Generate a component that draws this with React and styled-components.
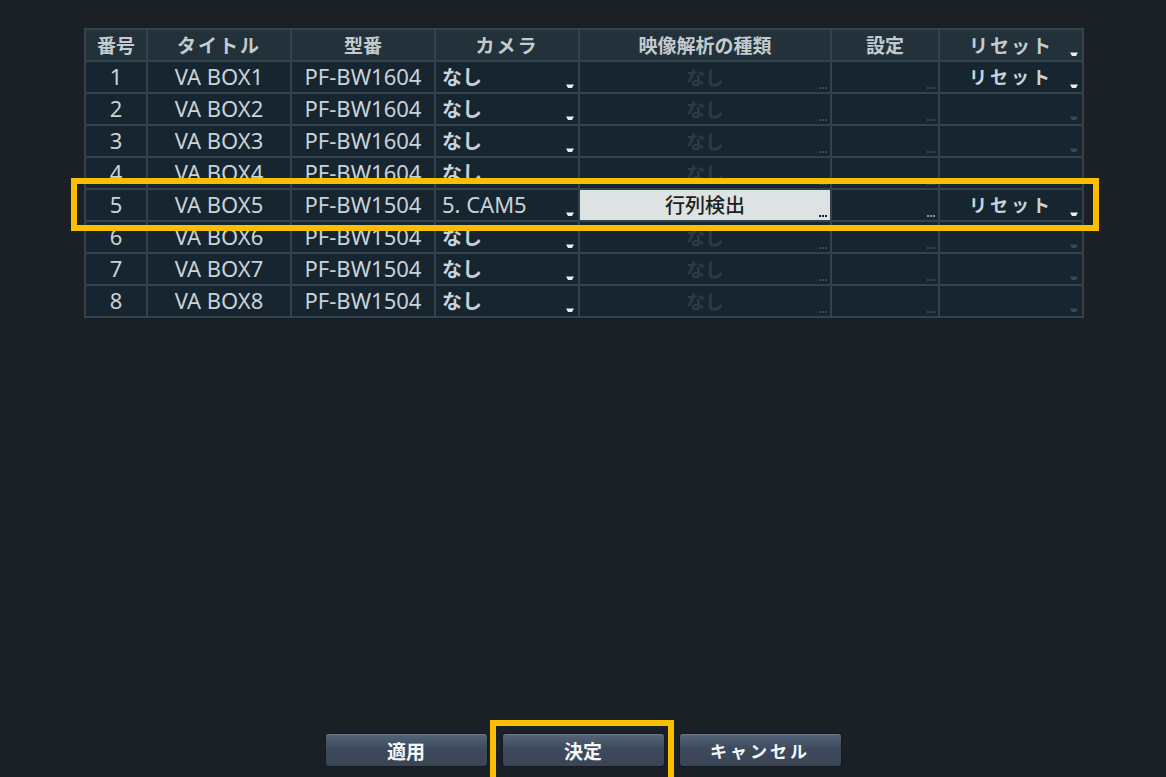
import React from 'react';
import styled, { createGlobalStyle } from 'styled-components';

const GlobalStyle = createGlobalStyle`
  html, body {
    margin: 0;
    padding: 0;
    background: #1b2027;
  }
  body {
    font-family: "Noto Sans", "Noto Sans CJK JP", sans-serif;
  }
`;

const Screen = styled.div`
  width: 1166px;
  height: 777px;
  background: #1b2027;
  display: flex;
  flex-direction: column;
  justify-content: space-between;
  overflow: hidden;
  position: relative;
`;

const TableWrap = styled.div`
  padding: 28px 0 0 84px;
`;

const Table = styled.div`
  display: grid;
  grid-template-columns: 60px 142px 142px 142px 250px 106px 142px;
  grid-auto-rows: 30px;
  gap: 2px;
  padding: 2px;
  width: max-content;
  background: #33434d;
`;

const Row = styled.div`
  display: contents;
`;

const HeadCell = styled.div`
  position: relative;
  background: #22313a;
  color: #c3cbcf;
  font-family: "Noto Sans CJK JP", sans-serif;
  font-weight: 700;
  font-size: 19px;
  letter-spacing: ${(p) => (p.$wide ? '2px' : '0')};
  display: flex;
  align-items: center;
  justify-content: center;
  padding-bottom: 2px;
`;

const Cell = styled.div`
  position: relative;
  background: ${(p) => (p.$lit ? '#dde2e2' : '#172530')};
  color: ${(p) => (p.$lit ? '#1c1f22' : p.$dim ? '#2c3c47' : '#c9d2d6')};
  font-family: "Noto Sans", "Noto Sans CJK JP", sans-serif;
  font-size: 22px;
  font-weight: 400;
  display: flex;
  align-items: center;
  justify-content: ${(p) => (p.$left ? 'flex-start' : 'center')};
  padding-left: ${(p) => (p.$left ? '6px' : '0')};
  padding-bottom: 2px;
  letter-spacing: ${(p) => (p.$wide ? '3px' : '0')};
  white-space: nowrap;
`;

const Jp = styled.span`
  font-family: "Noto Sans CJK JP", sans-serif;
  font-size: ${(p) => p.$size || 18}px;
  font-weight: ${(p) => p.$weight || 700};
`;

const Arrow = styled.svg`
  position: absolute;
  right: 4px;
  bottom: 3px;
  width: 8px;
  height: 5px;
`;

const Dots = styled.div`
  position: absolute;
  right: 3px;
  bottom: 3px;
  display: flex;
  gap: 1px;
  span {
    width: 2px;
    height: 2px;
    background: ${(p) => p.$color};
  }
`;

const Highlight = styled.div`
  position: absolute;
  left: ${(p) => p.$l}px;
  top: ${(p) => p.$t}px;
  width: ${(p) => p.$w}px;
  height: ${(p) => p.$h}px;
  border: 6px solid #fcbf00;
  box-sizing: border-box;
  pointer-events: none;
`;

const ButtonBar = styled.div`
  display: flex;
  justify-content: center;
  gap: 16px;
  padding: 0 0 11px 0;
`;

const Button = styled.div`
  width: 161px;
  height: 32px;
  border-radius: 3px;
  background: linear-gradient(#55657a, #3e4a5c 45%, #3a4557);
  box-shadow: inset 0 1px 0 rgba(255, 255, 255, 0.15), 0 0 0 1px #151a20;
  color: #f4f6f8;
  font-family: "Noto Sans CJK JP", sans-serif;
  font-weight: 700;
  font-size: ${(p) => (p.$wide ? '17px' : '19px')};
  letter-spacing: ${(p) => (p.$wide ? '3px' : '0')};
  display: flex;
  align-items: center;
  justify-content: center;
`;

const DropArrow = ({ color = '#e8ecee' }) => (
  <Arrow viewBox="0 0 8 5">
    <path d="M0 0.5 H8 L6 4 H2 Z" fill={color} />
  </Arrow>
);

const Ellipsis = ({ color }) => (
  <Dots $color={color}>
    <span />
    <span />
    <span />
  </Dots>
);

const rows = [
  { no: 1, title: 'VA BOX1', model: 'PF-BW1604', cam: 'なし', reset: true },
  { no: 2, title: 'VA BOX2', model: 'PF-BW1604', cam: 'なし' },
  { no: 3, title: 'VA BOX3', model: 'PF-BW1604', cam: 'なし' },
  { no: 4, title: 'VA BOX4', model: 'PF-BW1604', cam: 'なし' },
  { no: 5, title: 'VA BOX5', model: 'PF-BW1504', cam: '5. CAM5', kind: '行列検出', reset: true },
  { no: 6, title: 'VA BOX6', model: 'PF-BW1504', cam: 'なし' },
  { no: 7, title: 'VA BOX7', model: 'PF-BW1504', cam: 'なし' },
  { no: 8, title: 'VA BOX8', model: 'PF-BW1504', cam: 'なし' },
];

export default function App() {
  return (
    <Screen>
      <GlobalStyle />
      <TableWrap>
        <Table>
          <Row>
            <HeadCell>番号</HeadCell>
            <HeadCell $wide>タイトル</HeadCell>
            <HeadCell>型番</HeadCell>
            <HeadCell $wide>カメラ</HeadCell>
            <HeadCell>映像解析の種類</HeadCell>
            <HeadCell>設定</HeadCell>
            <HeadCell $wide>
              リセット
              <DropArrow />
            </HeadCell>
          </Row>
          {rows.map((r) => (
            <Row key={r.no}>
              <Cell>{r.no}</Cell>
              <Cell>{r.title}</Cell>
              <Cell>{r.model}</Cell>
              <Cell $left>
                {r.cam === 'なし' ? <Jp $size={20}>なし</Jp> : r.cam}
                <DropArrow />
              </Cell>
              {r.kind ? (
                <Cell $lit>
                  <Jp $size={20} $weight={500}>{r.kind}</Jp>
                  <Ellipsis color="#1f2326" />
                </Cell>
              ) : (
                <Cell $dim>
                  <Jp $size={19}>なし</Jp>
                  <Ellipsis color="#3c4a54" />
                </Cell>
              )}
              <Cell>
                <Ellipsis color={r.kind ? '#8c98a0' : '#3c4a54'} />
              </Cell>
              <Cell $wide>
                {r.reset && <Jp>リセット</Jp>}
                <DropArrow color={r.reset ? '#e8ecee' : '#3c4a54'} />
              </Cell>
            </Row>
          ))}
        </Table>
      </TableWrap>
      <ButtonBar>
        <Button>適用</Button>
        <Button>決定</Button>
        <Button $wide>キャンセル</Button>
      </ButtonBar>
      <Highlight $l={71} $t={178} $w={1028} $h={53} />
      <Highlight $l={490} $t={720} $w={184} $h={64} />
    </Screen>
  );
}
